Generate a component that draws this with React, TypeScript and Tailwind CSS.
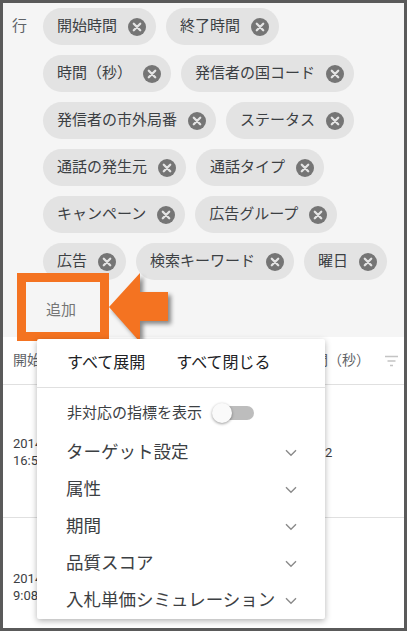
import React from "react";

const chips = [
  "開始時間",
  "終了時間",
  "時間（秒）",
  "発信者の国コード",
  "発信者の市外局番",
  "ステータス",
  "通話の発生元",
  "通話タイプ",
  "キャンペーン",
  "広告グループ",
  "広告",
  "検索キーワード",
  "曜日",
];

const menuItems = ["ターゲット設定", "属性", "期間", "品質スコア", "入札単価シミュレーション"];

function CloseIcon() {
  return (
    <svg width="18" height="18" viewBox="0 0 18 18" className="shrink-0">
      <circle cx="9" cy="9" r="9" fill="#757575" />
      <path d="M5.8 5.8L12.2 12.2M12.2 5.8L5.8 12.2" stroke="#e4e4e4" strokeWidth="2.3" strokeLinecap="round" />
    </svg>
  );
}

function Chevron() {
  return (
    <svg width="12" height="8" viewBox="0 0 12 8" className="shrink-0">
      <path d="M1 1.2L6 6.2L11 1.2" fill="none" stroke="#8a8a8a" strokeWidth="1.4" />
    </svg>
  );
}

export default function App() {
  return (
    <div className="relative w-[407px] h-[631px] border-[3px] border-[#5a5a5a] bg-white overflow-hidden flex flex-col font-['Roboto','Noto_Sans_CJK_JP',sans-serif]">
      {/* top grey area */}
      <div className="h-[334px] shrink-0 bg-[#f5f5f5] pt-[5px]">
        <div className="flex pl-[9px] pr-[12px]">
          <div className="w-[31px] h-[37px] flex items-center text-[15px] text-[#5f6368]">行</div>
          <div className="flex-1 flex flex-wrap gap-x-[10px] gap-y-[10px]">
            {chips.map((c) => (
              <div
                key={c}
                className="h-[37px] rounded-full bg-[#e3e3e3] flex items-center pl-[14px] pr-[10px] gap-[11px] text-[15px] text-[#3c4043] whitespace-nowrap"
              >
                <span>{c}</span>
                <CloseIcon />
              </div>
            ))}
          </div>
        </div>
        <div className="mt-[12px] h-[36px] pl-[43px] flex items-center text-[15px] text-[#757575]">追加</div>
      </div>

      {/* table */}
      <div className="h-[48px] shrink-0 border-b border-[#e0e0e0] flex items-center pl-[10px] pr-[6px] text-[14px] text-[#5f6368]">
        <div className="w-[24px] overflow-hidden whitespace-nowrap">開始時間</div>
        <div className="ml-auto w-[47px] overflow-hidden whitespace-nowrap flex justify-end">時間（秒）</div>
        <svg width="13" height="12" viewBox="0 0 13 12" className="ml-[15px]">
          <path d="M0 1.5H13M2.5 6H10.5M5 10.5H8" stroke="#c4c4c4" strokeWidth="1.3" />
        </svg>
      </div>
      <div className="h-[133px] shrink-0 border-b border-[#e0e0e0] flex pl-[10px] text-[13px] text-[#3c4043] leading-[17px]">
        <div className="w-[312px] pt-[50px]">
          <div className="w-[24px] overflow-hidden whitespace-nowrap">
            <div>2014/03/27</div>
            <div>16:52:31</div>
          </div>
        </div>
        <div className="pt-[59px]">2</div>
      </div>
      <div className="flex-1 flex pl-[10px] text-[13px] text-[#3c4043] leading-[17px]">
        <div className="pt-[52px] w-[24px] overflow-hidden whitespace-nowrap">
          <div>2014/03/27</div>
          <div>9:08:12</div>
        </div>
      </div>

      {/* orange annotation box */}
      <div className="absolute left-[14px] top-[270px] w-[92px] h-[68px] border-[9px] border-[#f47321]" />

      {/* orange arrow */}
      <svg
        className="absolute left-[97px] top-[262px]"
        width="80"
        height="90"
        viewBox="0 0 80 90"
        style={{ filter: "drop-shadow(3px 3px 2px rgba(0,0,0,0.45))" }}
      >
        <polygon points="9,42 40,8 40,27 68,27 68,56 40,56 40,77" fill="#f47321" />
      </svg>

      {/* dropdown menu */}
      <div className="absolute left-[34px] top-[336px] w-[288px] h-[280px] bg-white rounded-[2px] shadow-[0_2px_6px_rgba(0,0,0,0.3)] flex flex-col">
        <div className="h-[48px] flex items-center pl-[30px] gap-[31px] text-[16px] text-[#202124]">
          <span>すべて展開</span>
          <span>すべて閉じる</span>
        </div>
        <div className="h-px bg-[#e0e0e0]" />
        <div className="h-[46px] pt-[4px] flex items-center pl-[30px] text-[15px] text-[#3c4043]">
          <span>非対応の指標を表示</span>
          <div className="relative ml-[10px] w-[42px] h-[20px]">
            <div className="absolute left-[4px] right-0 top-[3px] h-[14px] rounded-full bg-[#bdbdbd]" />
            <div className="absolute left-0 top-0 w-[20px] h-[20px] rounded-full bg-[#fafafa] shadow-[0_1px_3px_rgba(0,0,0,0.4)]" />
          </div>
        </div>
        {menuItems.map((m) => (
          <div key={m} className="h-[37px] flex items-center justify-between pl-[29px] pr-[28px] text-[17.5px] text-[#3c4043] whitespace-nowrap">
            <span>{m}</span>
            <Chevron />
          </div>
        ))}
      </div>
    </div>
  );
}
